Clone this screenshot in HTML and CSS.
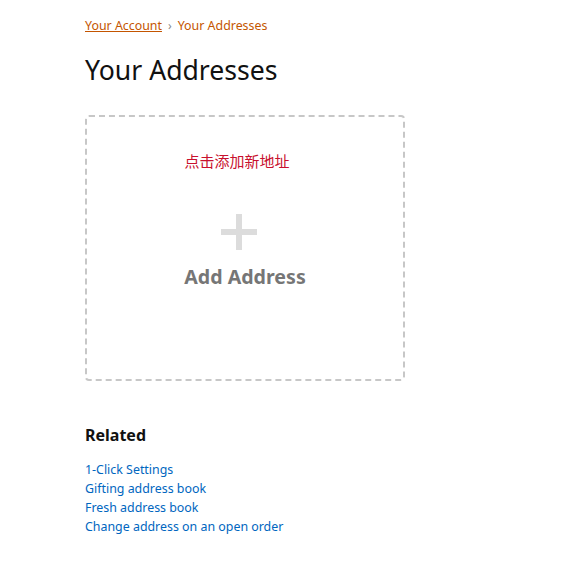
FILE: index.html
```html
<!DOCTYPE html>
<html lang="en">
<head>
  <meta charset="UTF-8">
  <title>Your Addresses</title>
  <link rel="stylesheet" href="styles.css">
</head>
<body>
  <div class="page">
    <div class="breadcrumb">
      <a href="#" class="crumb-link">Your Account</a>
      <span class="sep">&rsaquo;</span>
      <span class="crumb-current">Your Addresses</span>
    </div>

    <h1>Your Addresses</h1>

    <a href="#" class="add-box">
      <span class="add-hint">点击添加新地址</span>
      <span class="plus"></span>
      <span class="add-label">Add Address</span>
    </a>

    <div class="related">
      <h2>Related</h2>
      <ul>
        <li><a href="#">1-Click Settings</a></li>
        <li><a href="#">Gifting address book</a></li>
        <li><a href="#">Fresh address book</a></li>
        <li><a href="#">Change address on an open order</a></li>
      </ul>
    </div>
  </div>
</body>
</html>
```

FILE: styles.css
```css
body { margin: 0; font-family: "Noto Sans", "Noto Sans CJK SC", sans-serif; background: #fff; color: #111; }
.page { padding: 16px 0 30px 85px; }

.breadcrumb { font-size: 12.4px; line-height: 19px; color: #c45500; display: flex; align-items: center; gap: 6px; }
.crumb-link { color: #c45500; text-decoration: underline; }
.sep { color: #888; font-size: 12px; }

h1 { font-size: 26.6px; font-weight: 400; line-height: 36px; margin: 17px 0 27px; }

.add-box {
  display: flex;
  flex-direction: column;
  align-items: center;
  width: 320px;
  height: 266px;
  box-sizing: border-box;
  border: 2px dashed #c7c7c7;
  border-radius: 4px;
  text-decoration: none;
}
.add-hint { color: #c8102e; font-size: 15px; line-height: 20px; margin: 34px 16px 0 0; font-family: "Noto Sans CJK SC", sans-serif; }
.plus {
  position: relative;
  width: 36px;
  height: 36px;
  margin: 43px 12px 0 0;
}
.plus::before, .plus::after { content: ""; position: absolute; background: #dcdcdc; }
.plus::before { left: 0; top: 15px; width: 36px; height: 6px; }
.plus::after { left: 15px; top: 0; width: 6px; height: 36px; }
.add-label { color: #767676; font-size: 19.6px; font-weight: 700; line-height: 28px; margin-top: 13px; }

.related { margin-top: 43px; }
.related h2 { font-size: 16px; font-weight: 700; line-height: 22px; margin: 0 0 14px; }
.related ul { list-style: none; padding: 0; margin: 0; }
.related li { font-size: 12.4px; line-height: 19px; }
.related a { color: #0066c0; text-decoration: none; }
```
